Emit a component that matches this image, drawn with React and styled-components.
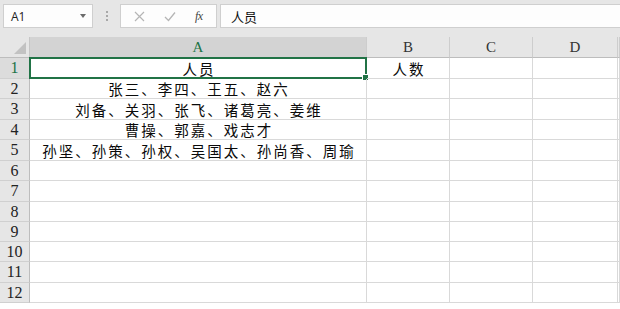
import React from "react";
import styled, { createGlobalStyle } from "styled-components";

const Global = createGlobalStyle`
  html, body { margin: 0; padding: 0; background: #ffffff; overflow: hidden; }
  #root { width: 620px; height: 309px; overflow: hidden; }
`;

const Page = styled.div`
  width: 620px;
  height: 309px;
  display: flex;
  flex-direction: column;
  background: #fff;
  font-family: "Noto Sans CJK SC", sans-serif;
`;

const FormulaBar = styled.div`
  height: 37px;
  flex: none;
  box-sizing: border-box;
  background: #e6e6e6;
  display: flex;
  align-items: flex-start;
  padding: 4px 0 0 3px;
`;

const Box = styled.div`
  height: 24px;
  box-sizing: border-box;
  background: #fdfdfd;
  border: 1px solid #cfcfcf;
  display: flex;
  align-items: center;
`;

const NameBox = styled(Box)`
  width: 90px;
  padding: 0 6px 0 7px;
  justify-content: space-between;
  font-family: "Open Sans", "Liberation Sans", sans-serif;
  font-size: 12px;
  color: #222;
`;

const Caret = styled.span`
  width: 0;
  height: 0;
  border-left: 3.5px solid transparent;
  border-right: 3.5px solid transparent;
  border-top: 4px solid #6b6b6b;
`;

const Dots = styled.div`
  width: 27px;
  height: 24px;
  display: flex;
  flex-direction: column;
  align-items: center;
  justify-content: center;
  gap: 2px;
  & > span {
    width: 2px;
    height: 2px;
    background: #a8a8a8;
  }
`;

const FuncBox = styled(Box)`
  width: 97px;
  justify-content: space-around;
  padding: 0 4px;
`;

const FxText = styled.span`
  font-family: "Liberation Serif", serif;
  font-style: italic;
  font-size: 12px;
  color: #444;
  letter-spacing: -0.5px;
`;

const FormulaInput = styled(Box)`
  flex: 1;
  margin-left: 3px;
  border-right: none;
  padding-left: 10px;
  font-size: 13px;
  color: #111;
`;

const Sheet = styled.div`
  display: flex;
  flex-direction: column;
  flex: 1;
`;

const Row = styled.div`
  display: flex;
  height: ${(p) => p.$h}px;
  flex: none;
`;

const Corner = styled.div`
  width: 30px;
  flex: none;
  box-sizing: border-box;
  background: #e6e6e6;
  border-right: 1px solid #c6c6c6;
  border-bottom: 1px solid #bdbdbd;
  position: relative;
  &::after {
    content: "";
    position: absolute;
    right: 3px;
    bottom: 3px;
    width: 12px;
    height: 12px;
    background: #c2c2c2;
    clip-path: polygon(100% 0, 100% 100%, 0 100%);
  }
`;

const ColHead = styled.div`
  width: ${(p) => p.$w}px;
  flex: none;
  box-sizing: border-box;
  background: ${(p) => (p.$sel ? "#d3d3d3" : "#e6e6e6")};
  border-right: 1px solid #cdcdcd;
  border-bottom: 1px solid ${(p) => (p.$sel ? "#a8a8a8" : "#bdbdbd")};
  display: flex;
  align-items: center;
  justify-content: center;
  font-family: "Liberation Serif", serif;
  font-size: 15px;
  color: ${(p) => (p.$sel ? "#217346" : "#333")};
  padding-top: 1px;
`;

const RowHead = styled.div`
  width: 30px;
  flex: none;
  box-sizing: border-box;
  background: ${(p) => (p.$sel ? "#dcdcdc" : "#e6e6e6")};
  border-right: 1px solid ${(p) => (p.$sel ? "#a8a8a8" : "#bdbdbd")};
  border-bottom: 1px solid #d0d0d0;
  display: flex;
  align-items: center;
  justify-content: center;
  font-family: "Liberation Serif", serif;
  font-size: 16px;
  line-height: 1;
  color: ${(p) => (p.$sel ? "#217346" : "#222")};
`;

const Cell = styled.div`
  width: ${(p) => p.$w}px;
  flex: none;
  box-sizing: border-box;
  border-right: 1px solid #d9d9d9;
  border-bottom: 1px solid #d9d9d9;
  display: flex;
  align-items: center;
  justify-content: center;
  position: relative;
`;

const CellText = styled.span`
  display: block;
  font-size: 14.5px;
  letter-spacing: 2px;
  margin-right: -2px;
  line-height: 17px;
  color: #0a0a0a;
  white-space: nowrap;
`;

const Selection = styled.div`
  position: absolute;
  left: -1px;
  top: -1px;
  right: -1px;
  bottom: -1px;
  border: 2px solid #217346;
  pointer-events: none;
  &::after {
    content: "";
    position: absolute;
    right: -4px;
    bottom: -4px;
    width: 5px;
    height: 5px;
    background: #217346;
    border: 1px solid #fff;
  }
`;

const cols = [
  { name: "A", w: 337 },
  { name: "B", w: 83 },
  { name: "C", w: 83 },
  { name: "D", w: 85 },
  { name: "", w: 2 },
];

const data = [
  ["人员", "人数"],
  ["张三、李四、王五、赵六", ""],
  ["刘备、关羽、张飞、诸葛亮、姜维", ""],
  ["曹操、郭嘉、戏志才", ""],
  ["孙坚、孙策、孙权、吴国太、孙尚香、周瑜", ""],
  ["", ""],
  ["", ""],
  ["", ""],
  ["", ""],
  ["", ""],
  ["", ""],
  ["", ""],
];

const heights = [21, 20, 21, 20, 21, 20, 21, 20, 20, 20, 21, 20];

export default function App() {
  return (
    <>
      <Global />
      <Page>
        <FormulaBar>
          <NameBox>
            <span>A1</span>
            <Caret />
          </NameBox>
          <Dots>
            <span />
            <span />
            <span />
          </Dots>
          <FuncBox>
            <svg width="11" height="11" viewBox="0 0 11 11">
              <path d="M1 1 L10 10 M10 1 L1 10" stroke="#b5b5b5" strokeWidth="1.2" />
            </svg>
            <svg width="12" height="11" viewBox="0 0 12 11">
              <path d="M1 6 L4.5 9.5 L11 1.5" stroke="#b5b5b5" strokeWidth="1.3" fill="none" />
            </svg>
            <FxText>fx</FxText>
          </FuncBox>
          <FormulaInput>人员</FormulaInput>
        </FormulaBar>
        <Sheet>
          <Row $h={21}>
            <Corner />
            {cols.map((c, i) => (
              <ColHead key={i} $w={c.w} $sel={c.name === "A"}>
                {c.name}
              </ColHead>
            ))}
          </Row>
          {data.map((r, ri) => (
            <Row key={ri} $h={heights[ri]}>
              <RowHead $sel={ri === 0}>{ri + 1}</RowHead>
              {cols.map((c, ci) => (
                <Cell key={ci} $w={c.w}>
                  {r[ci] ? <CellText>{r[ci]}</CellText> : null}
                  {ri === 0 && ci === 0 && <Selection />}
                </Cell>
              ))}
            </Row>
          ))}
        </Sheet>
      </Page>
    </>
  );
}
